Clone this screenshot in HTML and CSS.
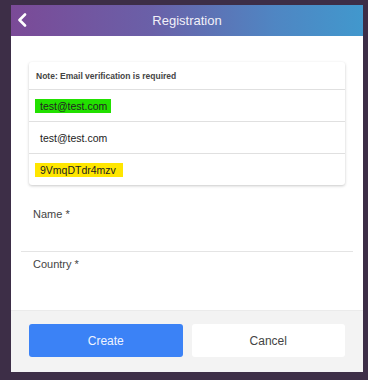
FILE: index.html
```html
<!DOCTYPE html>
<html lang="en">
  <head>
    <meta charset="UTF-8" />
    <meta name="viewport" content="width=device-width, initial-scale=1.0" />
    <title>Registration</title>
    <link rel="stylesheet" href="styles.css">
  </head>
  <body>
    <div class="modal">
      <div class="header">
        <button class="back-btn">
          <svg width="10" height="14" viewBox="0 0 10 14">
            <path d="M8 1.5 L2.5 7 L8 12.5" fill="none" stroke="white" stroke-width="2.6" stroke-linecap="round" stroke-linejoin="round" />
          </svg>
        </button>
        <h2>Registration</h2>
      </div>
      <div class="content">
        <div class="card">
          <div class="row note">Note: Email verification is required</div>
          <div class="row"><span class="mark green">test@test.com</span></div>
          <div class="row plain">test@test.com</div>
          <div class="row"><span class="mark yellow">9VmqDTdr4mzv</span></div>
        </div>
        <div class="field name">Name *</div>
        <div class="field country">Country *</div>
      </div>
      <div class="footer">
        <button class="create-btn">Create</button>
        <button class="cancel-btn">Cancel</button>
      </div>
    </div>
  </body>
</html>
```

FILE: styles.css
```css
body {
  margin: 0;
  background-color: #3d2e47;
  font-family: "Liberation Sans", Arial, sans-serif;
  height: 380px;
  overflow: hidden;
}
.modal {
  margin: 5px 5px 0 11px;
  width: 352px;
  height: 367px;
  background-color: white;
  display: flex;
  flex-direction: column;
}
.header {
  height: 31px;
  background: linear-gradient(to right, #7b4a97, #6a60a8 40%, #4f86c3 75%, #4198cd);
  display: flex;
  align-items: center;
  position: relative;
}
.header h2 {
  flex: 1;
  margin: 0;
  text-align: center;
  color: #f2f0f8;
  font-size: 13px;
  font-weight: normal;
}
.back-btn {
  position: absolute;
  left: 5px;
  top: 8px;
  background: none;
  border: none;
  padding: 0;
  width: 12px;
  height: 16px;
}
.content {
  flex: 1;
  padding: 26px 18px 0 18px;
}
.card {
  border-radius: 3px;
  box-shadow: 0 1px 3px rgba(0, 0, 0, 0.22);
  background-color: white;
}
.row {
  height: 32px;
  display: flex;
  align-items: center;
  padding-left: 6px;
  font-size: 10.5px;
  color: #222;
  border-top: 1px solid #e0e0e0;
  box-sizing: border-box;
}
.row.note {
  height: 27px;
  border-top: none;
  font-size: 8.5px;
  font-weight: bold;
  color: #444;
  padding-left: 7px;
}
.row.plain {
  padding-left: 11px;
}
.mark {
  padding: 1px 4px 1px 5px;
}
.green {
  background-color: #22e000;
}
.yellow {
  background-color: #ffe600;
  padding-right: 7px;
}
.field {
  font-size: 11px;
  color: #444;
  padding-left: 4px;
}
.field.name {
  margin: 23px -8px 0 -8px;
  padding: 0 0 31px 12px;
  border-bottom: 1px solid #e4e4e4;
}
.field.country {
  padding-top: 6px;
}
.footer {
  height: 62px;
  background-color: #f3f3f3;
  border-top: 1px solid #ebebeb;
  box-sizing: border-box;
  display: flex;
  gap: 9px;
  padding: 13px 18px 0 18px;
}
.create-btn,
.cancel-btn {
  flex: 1;
  height: 33px;
  border: none;
  border-radius: 3px;
  font-family: "Liberation Sans", Arial, sans-serif;
  font-size: 12px;
}
.create-btn {
  background-color: #3b82f6;
  color: #eef4ff;
}
.cancel-btn {
  background-color: white;
  color: #444;
}
```
